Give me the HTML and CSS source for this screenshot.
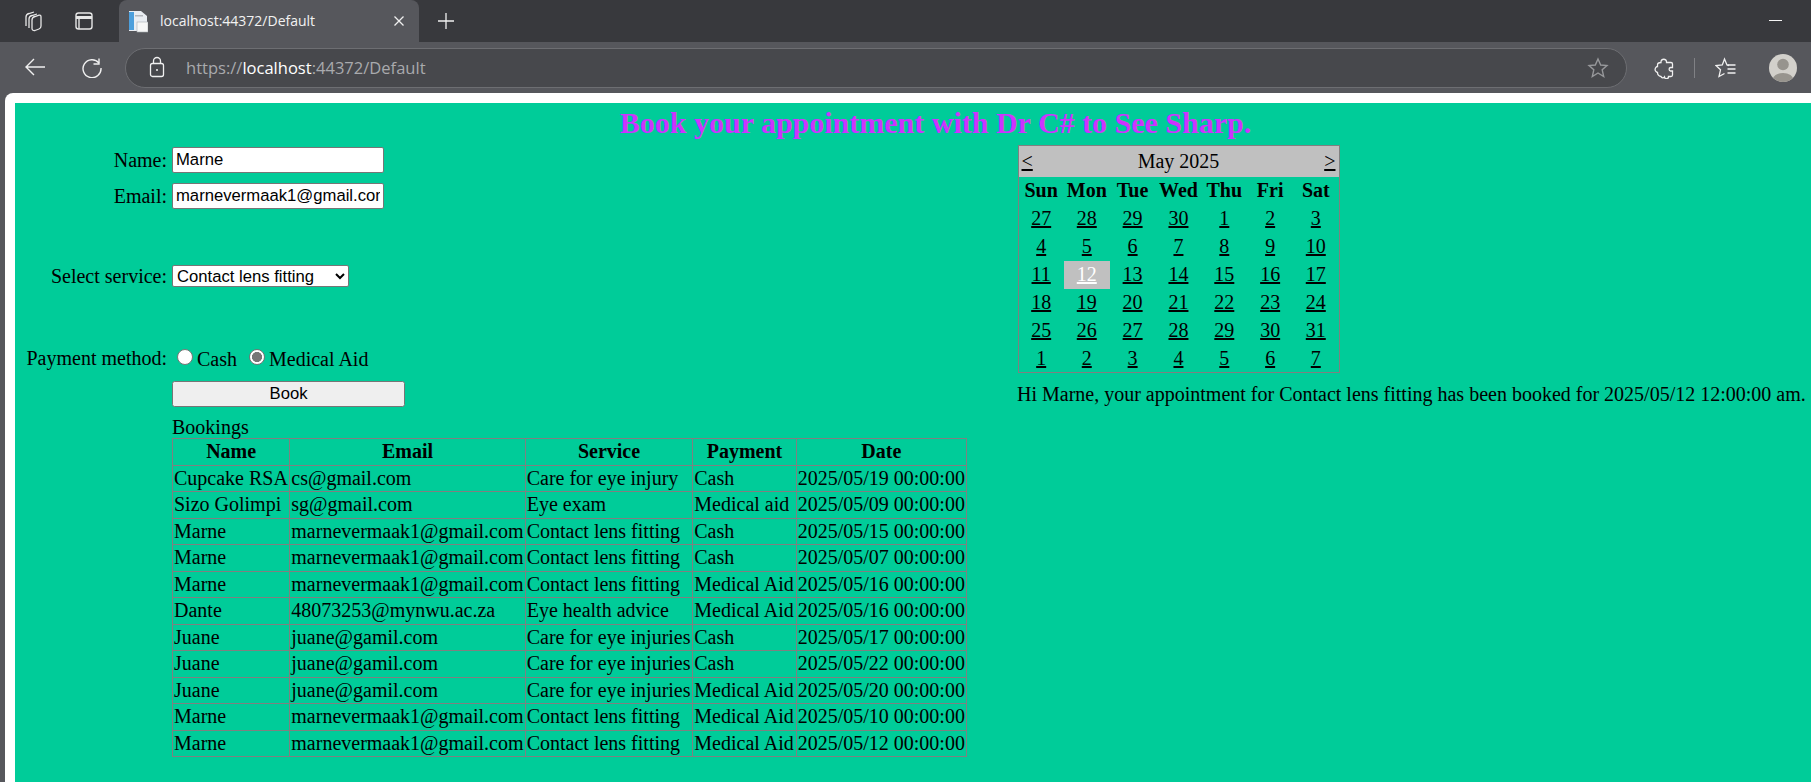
FILE: index.html
```html
<!DOCTYPE html>
<html lang="en">
<head>
<meta charset="utf-8">
<title>localhost:44372/Default</title>
<link rel="stylesheet" href="styles.css">
</head>
<body>
<div class="browser">
  <header class="tabstrip">
    <div class="strip-icons">
      <svg class="ic" width="24" height="24" viewBox="0 0 24 24" fill="none" stroke="#e6e6e6" stroke-width="1.3"><path d="M5 17V8c0-2 1-3 3-3.5L13 3"/><path d="M8 19V10c0-2 1-3 3-3.5L16 5"/><path d="M11 11c0-2 1-3 3-3.5l4-1.3c1-.3 2 .3 2 1.5V17c0 1.5-.7 2.5-2 3l-4 1.5c-1.5.4-3-.4-3-2z"/></svg>
      <svg class="ic" width="20" height="22" viewBox="0 0 20 22" fill="none" stroke="#e6e6e6" stroke-width="1.4"><rect x="2" y="3" width="16" height="16" rx="2.5"/><path d="M2 7.5h16" stroke-width="3"/><path d="M5 8v11" /></svg>
    </div>
    <div class="tab">
      <svg class="favicon" width="20" height="24" viewBox="0 0 20 24"><path d="M1 2h12l6 5v15H1z" fill="#e9edf2"/><rect x="1" y="3" width="5" height="18" fill="#4d9fdc"/><rect x="7" y="6" width="8" height="1.5" fill="#b4b8bd"/><rect x="9" y="13" width="11" height="10" fill="#f7f7f7" stroke="#a9adb2" stroke-width=".6"/></svg>
      <span class="tab-title">localhost:44372/Default</span>
      <svg class="tab-close" width="12" height="12" viewBox="0 0 12 12" stroke="#f0f0f0" stroke-width="1.3"><path d="M1.500 1.500l9 9M10.500 1.500l-9 9"/></svg>
    </div>
    <svg class="tab-new" width="18" height="18" viewBox="0 0 18 18" stroke="#f0f0f0" stroke-width="1.3"><path d="M9 1v16M1 9h16"/></svg>
    <div class="win-min"></div>
  </header>
  <nav class="toolbar">
    <svg class="nav-back" width="22" height="20" viewBox="0 0 22 20" fill="none" stroke="#f0f0f0" stroke-width="1.4"><path d="M21 10H2M10 2l-8 8 8 8"/></svg>
    <svg class="nav-reload" width="22" height="24" viewBox="0 0 22 24" fill="none" stroke="#f0f0f0" stroke-width="1.4"><path d="M18 4.500V10h-5.500"/><path d="M18 9a9 9 0 1 0 2 5"/></svg>
    <div class="address">
      <svg class="lock" width="16" height="22" viewBox="0 0 16 22" fill="none" stroke="#f0f0f0" stroke-width="1.3"><rect x="1.500" y="7.500" width="13" height="13" rx="2"/><path d="M4.500 7.500V5a3.500 3.500 0 0 1 7 0v2.500"/><circle cx="8" cy="14" r="1" fill="#f0f0f0" stroke="none"/></svg>
      <span class="url"><span class="dim">https://</span><span class="host">localhost</span><span class="dim">:44372/Default</span></span>
      <svg class="star" width="22" height="22" viewBox="0 0 22 22" fill="none" stroke="#97989b" stroke-width="1.4"><path d="M11 2l2.700 6 6.300.6-4.800 4.200 1.500 6.700-5.700-3.500-5.700 3.500 1.500-6.700L2 8.600 8.300 8z"/></svg>
    </div>
    <svg class="puzzle" width="20" height="21" viewBox="0 0 20 21" fill="none" stroke="#f0f0f0" stroke-width="1.3"><path d="M7 4.500V3.500a2.800 2.800 0 0 1 5.500 0v1H17a1.500 1.500 0 0 1 1.500 1.500v3.500h-2a1.800 1.800 0 0 0 0 3.500h2V17a1.500 1.500 0 0 1-1.500 1.500h-2.500a2 2 0 0 1-4 0.500 2 2 0 0 1-3.500-.5C5 18 3.500 16.500 3.500 14.500 1.500 14 .5 12 1.500 10c.5-1 1.500-1.500 2-1.500V7c0-1.500 1.500-2.500 3.500-2.500z"/></svg>
    <div class="divider"></div>
    <svg class="favs" width="22" height="22" viewBox="0 0 22 22" fill="none" stroke="#f0f0f0" stroke-width="1.3"><path d="M14 8.500L12 8 9.500 2 7.300 8 1 8.600l4.500 4.200L4 19.500l5.500-3"/><path d="M12.500 8h8M12.500 12h8M12.500 16h8"/></svg>
    <svg class="avatar" width="28" height="28" viewBox="0 0 28 28"><clipPath id="av"><circle cx="14" cy="14" r="14"/></clipPath><g clip-path="url(#av)"><rect width="28" height="28" fill="#d2d0cb"/><circle cx="14" cy="10.500" r="5.800" fill="#97948e"/><ellipse cx="14" cy="26" rx="10.500" ry="7" fill="#97948e"/></g></svg>
  </nav>
  <main class="page">
    <div class="content">
      <h1 class="heading">Book your appointment with Dr C# to See Sharp.</h1>
      <div class="columns">
        <section class="left">
          <div class="field f-name"><label class="lbl">Name:</label><input class="text-input" type="text" value="Marne"></div>
          <div class="field f-email"><label class="lbl">Email:</label><input class="text-input" type="text" value="marnevermaak1@gmail.com"></div>
          <div class="field f-service"><label class="lbl">Select service:</label>
            <select class="service"><option>Contact lens fitting</option><option>Eye exam</option></select></div>
          <div class="field f-pay"><label class="lbl">Payment method:</label>
            <span class="radios"><input class="radio" type="radio" name="pay"><span class="radio-text">Cash</span><input class="radio" type="radio" name="pay" checked><span class="radio-text">Medical Aid</span></span></div>
          <div class="field f-book"><span class="lbl"></span><button class="book" type="button">Book</button></div>
          <div class="bookings">
            <div class="bookings-title">Bookings</div>
            <table class="grid">
              <thead><tr><th class="c-name">Name</th><th class="c-email">Email</th><th class="c-service">Service</th><th class="c-pay">Payment</th><th class="c-date">Date</th></tr></thead>
              <tbody>
                <tr><td>Cupcake RSA</td><td>cs@gmail.com</td><td>Care for eye injury</td><td>Cash</td><td>2025/05/19 00:00:00</td></tr>
                <tr><td>Sizo Golimpi</td><td>sg@gmail.com</td><td>Eye exam</td><td>Medical aid</td><td>2025/05/09 00:00:00</td></tr>
                <tr><td>Marne</td><td>marnevermaak1@gmail.com</td><td>Contact lens fitting</td><td>Cash</td><td>2025/05/15 00:00:00</td></tr>
                <tr><td>Marne</td><td>marnevermaak1@gmail.com</td><td>Contact lens fitting</td><td>Cash</td><td>2025/05/07 00:00:00</td></tr>
                <tr><td>Marne</td><td>marnevermaak1@gmail.com</td><td>Contact lens fitting</td><td>Medical Aid</td><td>2025/05/16 00:00:00</td></tr>
                <tr><td>Dante</td><td>48073253@mynwu.ac.za</td><td>Eye health advice</td><td>Medical Aid</td><td>2025/05/16 00:00:00</td></tr>
                <tr><td>Juane</td><td>juane@gamil.com</td><td>Care for eye injuries</td><td>Cash</td><td>2025/05/17 00:00:00</td></tr>
                <tr><td>Juane</td><td>juane@gamil.com</td><td>Care for eye injuries</td><td>Cash</td><td>2025/05/22 00:00:00</td></tr>
                <tr><td>Juane</td><td>juane@gamil.com</td><td>Care for eye injuries</td><td>Medical Aid</td><td>2025/05/20 00:00:00</td></tr>
                <tr><td>Marne</td><td>marnevermaak1@gmail.com</td><td>Contact lens fitting</td><td>Medical Aid</td><td>2025/05/10 00:00:00</td></tr>
                <tr><td>Marne</td><td>marnevermaak1@gmail.com</td><td>Contact lens fitting</td><td>Medical Aid</td><td>2025/05/12 00:00:00</td></tr>
              </tbody>
            </table>
          </div>
        </section>
        <section class="right">
          <table class="calendar">
            <thead>
              <tr class="cal-title"><td colspan="7"><div class="cal-bar"><a href="#">&lt;</a><span>May 2025</span><a href="#">&gt;</a></div></td></tr>
              <tr class="cal-days"><th>Sun</th><th>Mon</th><th>Tue</th><th>Wed</th><th>Thu</th><th>Fri</th><th>Sat</th></tr>
            </thead>
            <tbody>
              <tr><td><a href="#">27</a></td><td><a href="#">28</a></td><td><a href="#">29</a></td><td><a href="#">30</a></td><td><a href="#">1</a></td><td><a href="#">2</a></td><td><a href="#">3</a></td></tr>
              <tr><td><a href="#">4</a></td><td><a href="#">5</a></td><td><a href="#">6</a></td><td><a href="#">7</a></td><td><a href="#">8</a></td><td><a href="#">9</a></td><td><a href="#">10</a></td></tr>
              <tr><td><a href="#">11</a></td><td class="selected"><a href="#">12</a></td><td><a href="#">13</a></td><td><a href="#">14</a></td><td><a href="#">15</a></td><td><a href="#">16</a></td><td><a href="#">17</a></td></tr>
              <tr><td><a href="#">18</a></td><td><a href="#">19</a></td><td><a href="#">20</a></td><td><a href="#">21</a></td><td><a href="#">22</a></td><td><a href="#">23</a></td><td><a href="#">24</a></td></tr>
              <tr><td><a href="#">25</a></td><td><a href="#">26</a></td><td><a href="#">27</a></td><td><a href="#">28</a></td><td><a href="#">29</a></td><td><a href="#">30</a></td><td><a href="#">31</a></td></tr>
              <tr><td><a href="#">1</a></td><td><a href="#">2</a></td><td><a href="#">3</a></td><td><a href="#">4</a></td><td><a href="#">5</a></td><td><a href="#">6</a></td><td><a href="#">7</a></td></tr>
            </tbody>
          </table>
          <p class="message">Hi Marne, your appointment for Contact lens fitting has been booked for 2025/05/12 12:00:00 am.</p>
        </section>
      </div>
    </div>
  </main>
</div>
</body>
</html>
```
FILE: styles.css
```css
* { box-sizing: border-box; }
html, body { margin: 0; height: 100%; overflow: hidden; }
body { font-family: "Liberation Serif", "Times New Roman", serif; font-size: 20px; color: #000; }
.browser { width: 1811px; height: 782px; display: flex; flex-direction: column; background: #56575c; overflow: hidden; }

.tabstrip { height: 42px; flex: none; background: #38393d; display: flex; align-items: center; position: relative; }
.strip-icons { display: flex; align-items: center; width: 119px; padding-left: 21px; gap: 29px; }
.tab { width: 300px; height: 42px; background: #56575c; border-radius: 8px 8px 0 0; display: flex; align-items: center; padding: 0 0 0 9px; }
.favicon { flex: none; }
.tab-title { font-family: "Open Sans", sans-serif; font-size: 14px; color: #f2f2f2; margin-left: 12px; width: 233px; padding-bottom: 1px; white-space: nowrap; }
.tab-close { flex: none; }
.tab-new { margin-left: 18px; flex: none; }
.win-min { position: absolute; right: 29px; top: 20px; width: 13px; height: 1px; background: #f5f5f5; }

.toolbar { height: 51px; flex: none; background: #56575c; display: flex; align-items: center; padding-top: 1px; position: relative; }
.nav-back { margin: 0 0 2px 24px; flex: none; }
.nav-reload { margin: 0 0 4px 35px; flex: none; }
.address { margin-left: 22px; width: 1502px; height: 40px; background: #47484c; border: 1.500px solid #6d6e72; border-radius: 20px; display: flex; align-items: center; padding: 0 17px 0 23px; }
.lock { flex: none; margin-bottom: 2px; }
.url { font-family: "Open Sans", sans-serif; font-size: 16.550px; margin-left: 21px; padding-bottom: 2px; white-space: nowrap; flex: 1; }
.dim { color: #a9aaad; }
.host { color: #fff; }
.star { flex: none; }
.puzzle { margin-left: 27px; flex: none; }
.divider { width: 1px; height: 20px; background: #808185; margin-left: 20px; flex: none; }
.favs { margin-left: 20px; flex: none; }
.avatar { margin-left: 32px; flex: none; }

.page { flex: 1; min-height: 0; margin-left: 5px; background: #fff; border-radius: 8px 0 0 0; padding: 10px 0 0 10px; }
.content { height: 100%; background: #00cc99; overflow: hidden; }

.heading { margin: 0; padding-left: 45px; height: 42px; font-size: 30px; line-height: 40px; font-weight: bold; color: #cc33ff; text-align: center; white-space: nowrap; }
.columns { display: flex; align-items: flex-start; }
.left { width: 1002px; flex: none; }
.right { flex: 1; min-width: 0; }

.field { display: flex; align-items: center; }
.lbl { width: 152px; margin-right: 5px; text-align: right; flex: none; }
.f-name { margin-top: 2px; height: 26px; }
.f-email { margin-top: 10px; height: 26px; }
.f-service { margin-top: 56px; height: 22px; }
.f-pay { margin-top: 60px; height: 24px; }
.f-pay .lbl { padding-bottom: 2px; }
.f-book { margin-top: 10px; height: 26px; }

.text-input { width: 212px; height: 100%; font-family: "Liberation Sans", Arial, sans-serif; font-size: 16.670px; padding: 0 3px; border: 1.250px solid #767676; border-radius: 2px; background: #fff; color: #000; }
.service { width: 177px; height: 22px; font-family: "Liberation Sans", Arial, sans-serif; font-size: 16.670px; background: #fff; border: 1.250px solid #767676; border-radius: 2px; color: #000; }
.radios { display: flex; align-items: center; margin-left: 5px; }
.radio { appearance: none; width: 16px; height: 16px; margin: 0 4px 0 0; background: #fff; border: 1.250px solid #767676; border-radius: 50%; position: relative; top: -2px; flex: none; }
.radio:checked { border-color: #767676; background: radial-gradient(circle, #767676 0 4.800px, #fff 5.300px); }
.radio-text { margin-right: 12px; }
.book { width: 233px; height: 26px; font-family: "Liberation Sans", Arial, sans-serif; font-size: 16.670px; background: #efefef; border: 1.250px solid #767676; border-radius: 2.500px; color: #000; padding: 0; }

.bookings { margin-left: 157px; margin-top: 7px; }
.bookings-title { height: 24.200px; padding-top: 2px; line-height: 23px; }
.grid { border-collapse: collapse; border: 1.250px solid #808080; table-layout: fixed; width: 794px; }
.grid th, .grid td { border: 1.250px solid #808080; padding: 1.250px 1px; height: 26.500px; line-height: 23px; white-space: nowrap; text-align: left; overflow: hidden; }
.grid th { text-align: center; }
.c-name { width: 117.300px; }
.c-email { width: 235.400px; }
.c-service { width: 167.600px; }
.c-pay { width: 103.400px; }
.c-date { width: 170.300px; }

.calendar { width: 322px; height: 227px; margin: 0 0 0 .5px; border-collapse: collapse; border: 1.250px solid #808080; table-layout: fixed; }
.calendar td, .calendar th { padding: 0; height: 28px; text-align: center; }
.calendar a { color: #000; text-decoration: underline; }
.cal-title td { height: 31px; background: #c0c0c0; }
.cal-bar { display: flex; justify-content: space-between; padding: 0 3px; }
.calendar .selected { background: #c0c0c0; }
.calendar .selected a { color: #fff; }
.message { margin: 10px 0 0 0; white-space: nowrap; line-height: 23px; }
```
